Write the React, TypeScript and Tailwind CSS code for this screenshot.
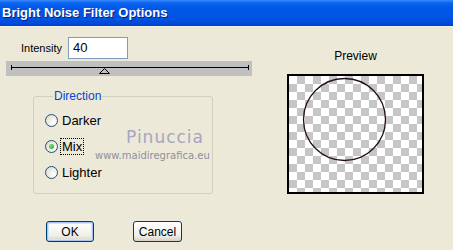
export default function App() {
  const font = { fontFamily: '"Liberation Sans", Arial, sans-serif' };
  const mark = { fontFamily: '"DejaVu Sans", sans-serif' };
  return (
    <div
      className="w-[453px] h-[250px] bg-[#ECE9D8] flex flex-col overflow-hidden text-[11px] text-black"
      style={font}
    >
      <div className="h-[27px] flex items-center pl-[2px] bg-[linear-gradient(to_bottom,#3A8CFF_0px,#0A62F0_3px,#0058E8_8px,#0054E3_18px,#0048D8_24px,#003CC0_27px)] border-b border-[#F4F2E8]">
        <span className="text-white font-bold text-[13px] [text-shadow:1px_1px_0_#0A1E7A]">
          Bright Noise Filter Options
        </span>
      </div>

      <div className="flex flex-1">
        <div className="w-[262px] flex flex-col relative">
          <div className="flex items-center mt-[10px] ml-[21px]">
            <span>Intensity</span>
            <div className="ml-[6px] w-[60px] h-[22px] bg-white border border-[#7F9DB9] flex items-center pl-[4px] text-[13px]">
              40
            </div>
          </div>

          <div className="ml-[6px] mt-[2px] w-[246px] h-[15px] bg-[#C0C0C0]">
            <svg width="246" height="15" viewBox="0 0 246 15">
              <line x1="5" y1="6.5" x2="243" y2="6.5" stroke="#000" strokeWidth="1" />
              <line x1="5.5" y1="4" x2="5.5" y2="9" stroke="#000" strokeWidth="1" />
              <line x1="242.5" y1="4" x2="242.5" y2="9" stroke="#000" strokeWidth="1" />
              <polygon points="93.5,12.5 98.5,7.5 103.5,12.5" fill="none" stroke="#000" strokeWidth="1" />
            </svg>
          </div>

          <fieldset className="ml-[33px] mt-[14px] w-[180px] h-[104px] border border-[#D0D0BF] rounded-[3px] pl-[11px] pt-[10px]">
            <legend className="text-[#0046D5] text-[12px] ml-[8px] px-[1px] leading-[13px]">Direction</legend>
            <div className="flex flex-col gap-[12px]">
              {[
                { label: "Darker", on: false },
                { label: "Mix", on: true },
                { label: "Lighter", on: false },
              ].map((r) => (
                <div key={r.label} className="flex items-center h-[14px]">
                  <div className="w-[13px] h-[13px] rounded-full border border-[#1C5180] bg-[radial-gradient(circle_at_70%_70%,#FFFFFF_0%,#E8E8E0_60%,#D4D4CB_100%)] flex items-center justify-center">
                    {r.on && (
                      <div className="w-[5px] h-[5px] rounded-full bg-[radial-gradient(circle_at_35%_35%,#7BE07B,#21A121)]" />
                    )}
                  </div>
                  <span
                    className={
                      "ml-[3px] text-[13px] leading-[15px] px-[1px] " +
                      (r.on ? "outline outline-1 outline-dotted outline-black" : "")
                    }
                  >
                    {r.label}
                  </span>
                </div>
              ))}
            </div>
          </fieldset>

          <span
            className="absolute left-[126px] top-[101px] text-[17px] text-[#A6A6C2] tracking-[1px] leading-[18px] pointer-events-none"
            style={mark}
          >
            Pinuccia
          </span>
          <span
            className="absolute left-[95px] top-[123px] text-[10px] text-[#8F8F9C] leading-[12px] pointer-events-none"
            style={mark}
          >
            www.maidiregrafica.eu
          </span>

          <div className="flex ml-[46px] mt-[27px] gap-[39px]">
            <button className="w-[48px] h-[21px] rounded-[3px] border border-[#003C74] bg-[linear-gradient(to_bottom,#FFFFFF,#F0F0EA_70%,#D6D0C5)] shadow-[inset_0_0_0_1px_#A7C4F5,inset_0_0_0_2px_#CEE7FF] text-[12px]">
              OK
            </button>
            <button className="w-[49px] h-[21px] rounded-[3px] border border-[#003C74] bg-[linear-gradient(to_bottom,#FFFFFF,#F0F0EA_70%,#D6D0C5)] text-[12px]">
              Cancel
            </button>
          </div>
        </div>

        <div className="ml-[25px] flex flex-col items-start">
          <div className="w-[137px] text-center mt-[22px] text-[12px] leading-[14px]">Preview</div>
          <div className="mt-[11px] w-[137px] h-[120px] border-2 border-black bg-[conic-gradient(#C6C6C6_25%,#FFFFFF_0_50%,#C6C6C6_0_75%,#FFFFFF_0)] bg-[length:16px_16px]">
            <svg width="133" height="116" viewBox="0 0 133 116">
              <circle cx="55.5" cy="43.5" r="41" fill="none" stroke="#241018" strokeWidth="1.3" />
            </svg>
          </div>
        </div>
      </div>
    </div>
  );
}
